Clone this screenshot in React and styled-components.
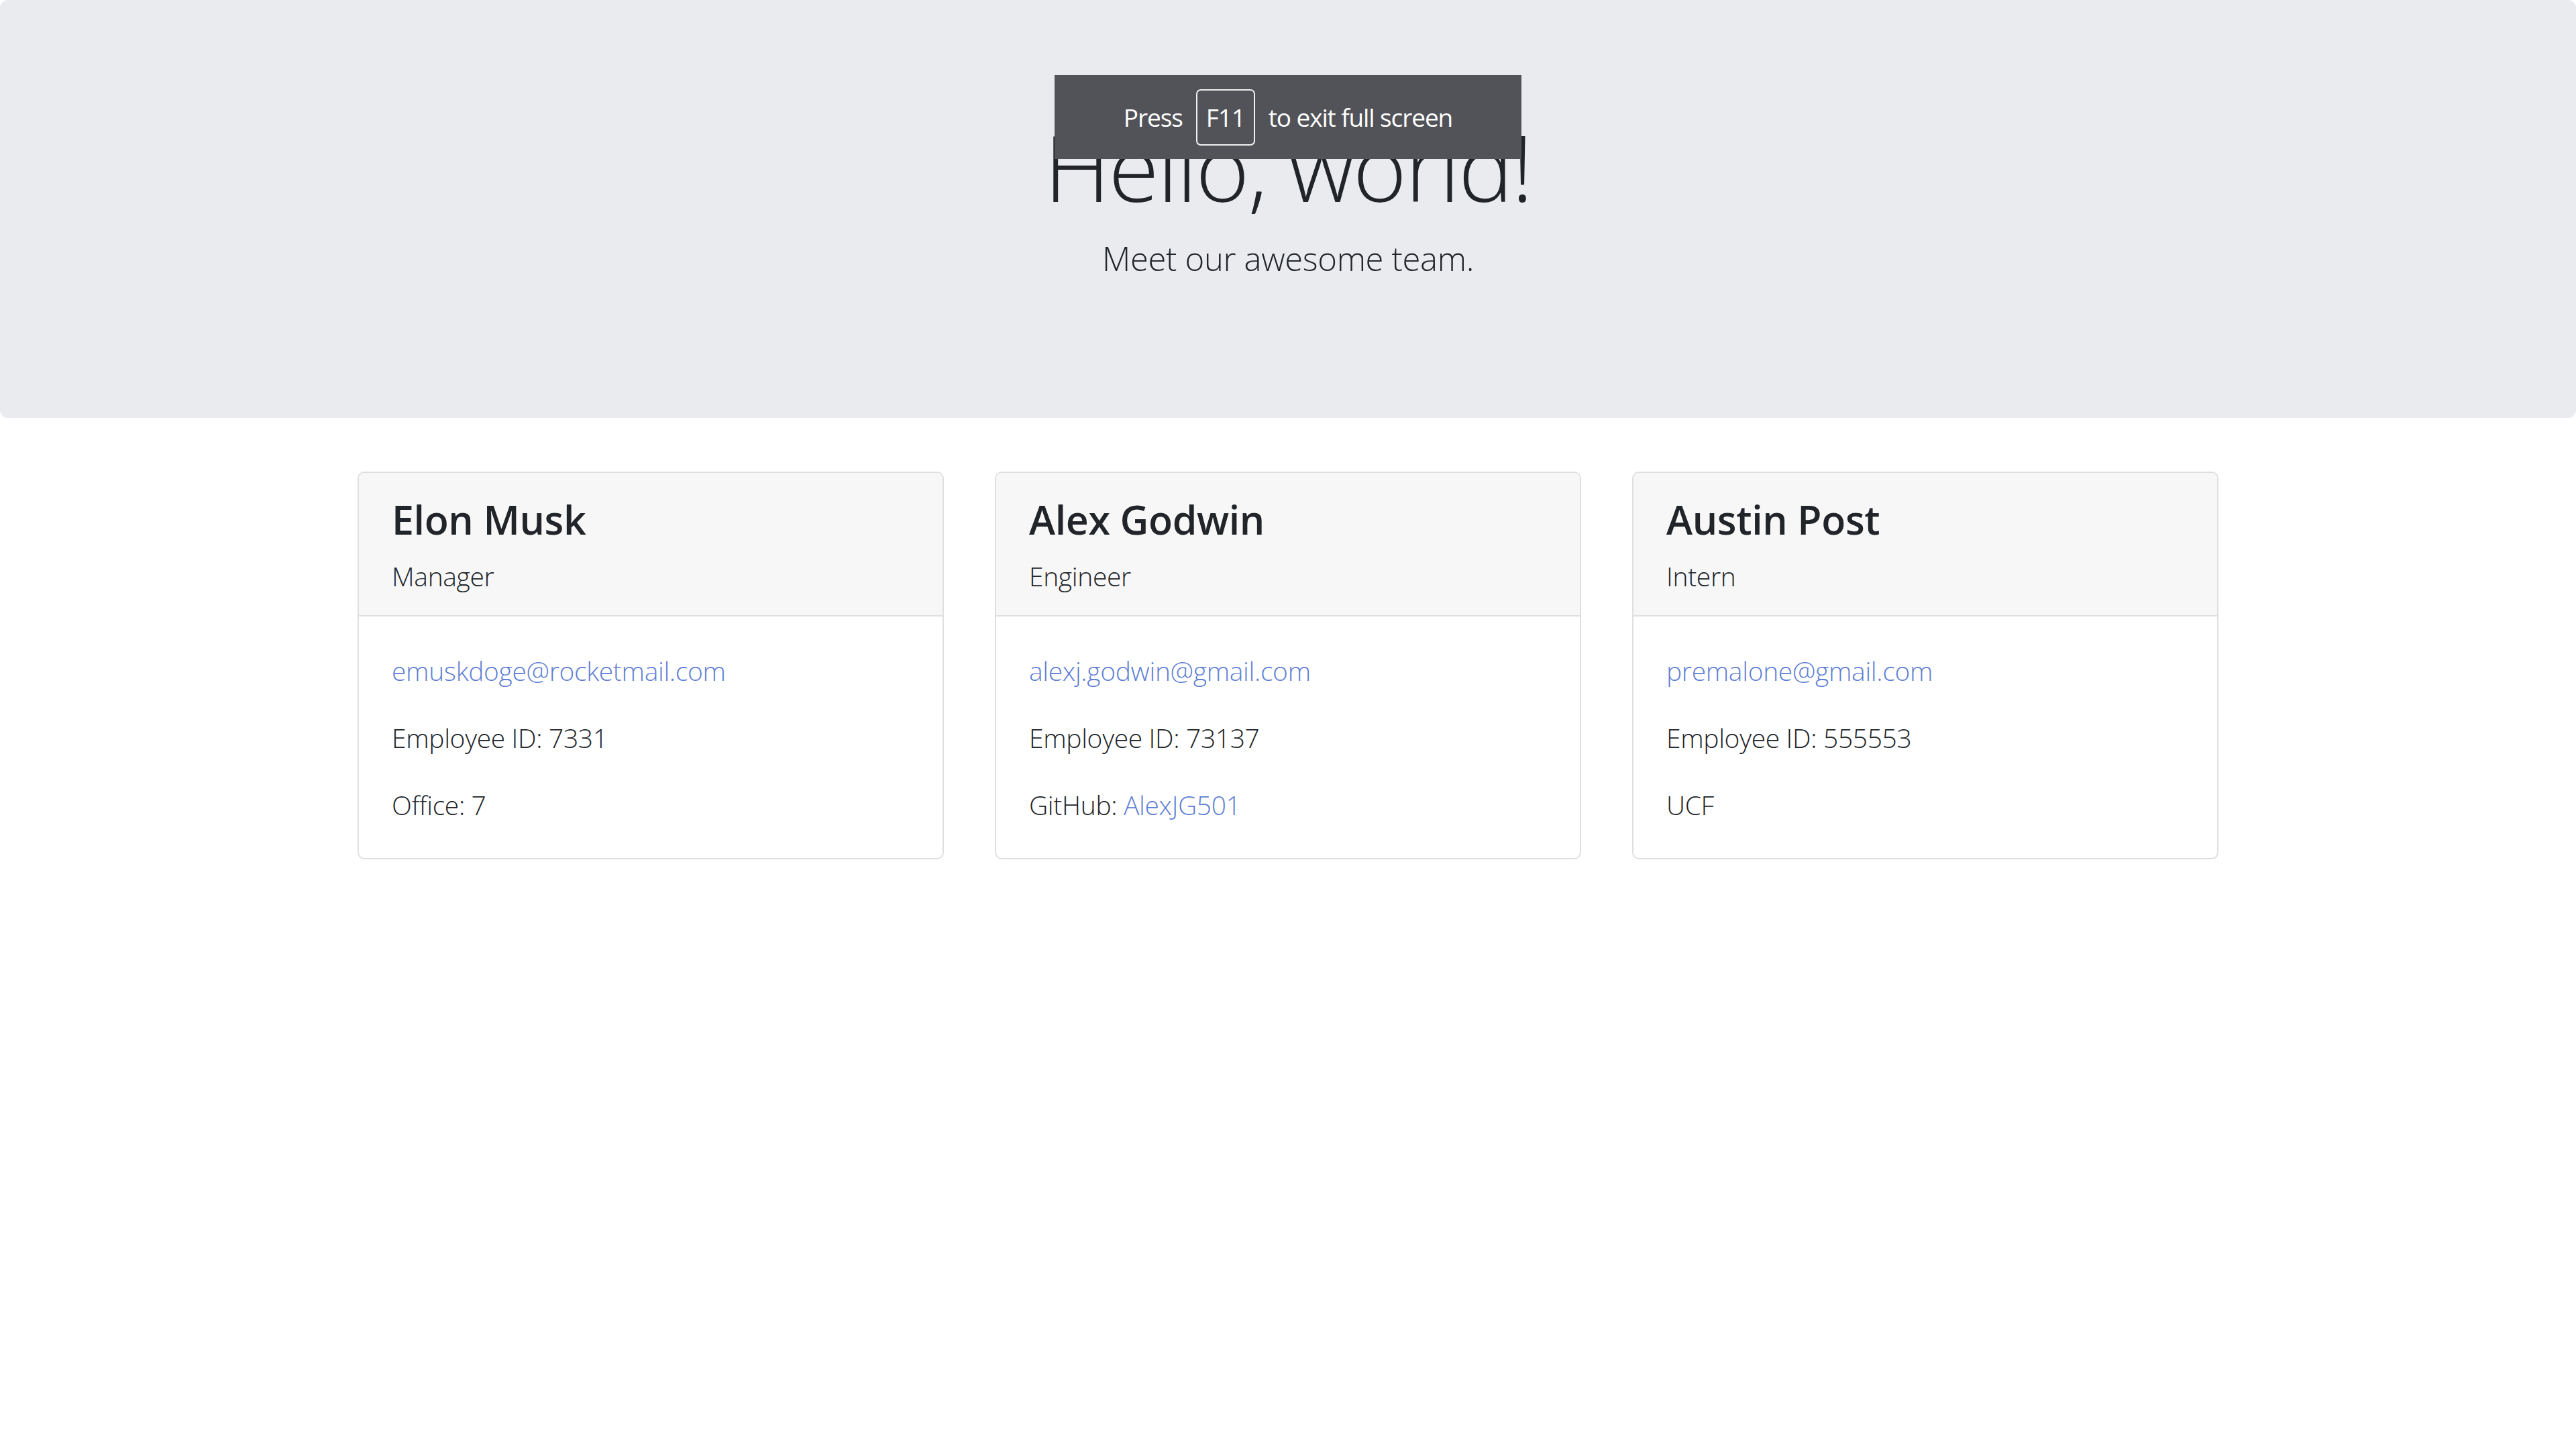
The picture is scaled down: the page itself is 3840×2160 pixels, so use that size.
import React from 'react';
import styled, { createGlobalStyle } from 'styled-components';

const GlobalStyle = createGlobalStyle`
    * {
        box-sizing: border-box;
    }
    body {
        margin: 0;
        background: #fff;
        color: #212529;
        font-family: "Open Sans", "Noto Sans", sans-serif;
        font-weight: 300;
        line-height: 1.5;
        letter-spacing: -0.022em;
    }
`;

const Page = styled.div`
    position: relative;
    min-height: 2160px;
`;

const Jumbotron = styled.header`
    background: #eaebef;
    border-radius: 12px;
    padding: 166px 78px 161px;
    margin-bottom: 80px;
    text-align: center;
`;

const Title = styled.h1`
    margin: 0 0 18px;
    font-size: 137px;
    font-weight: 300;
    line-height: 165px;
    letter-spacing: -0.018em;
`;

const Lead = styled.p`
    margin: 0 0 39px;
    font-size: 49px;
    font-weight: 300;
    line-height: 73.5px;
`;

const FullscreenNotice = styled.div`
    position: absolute;
    top: 112px;
    left: 50%;
    transform: translateX(-50%);
    width: 696px;
    height: 125px;
    background: #525358;
    color: #fff;
    font-size: 37px;
    font-weight: 400;
    letter-spacing: -0.03em;
    display: flex;
    align-items: center;
    justify-content: center;
    gap: 20px;
`;

const Key = styled.span`
    display: flex;
    align-items: center;
    justify-content: center;
    width: 88px;
    height: 84px;
    border: 2px solid #f0f0f0;
    border-radius: 7px;
`;

const CardGrid = styled.section`
    display: grid;
    grid-template-columns: repeat(3, 874px);
    gap: 76px;
    justify-content: center;
`;

const Card = styled.article`
    background: #fff;
    border: 2px solid #dfdfdf;
    border-radius: 10px;
    overflow: hidden;
`;

const CardHeader = styled.div`
    background: #f7f7f7;
    border-bottom: 2px solid #dfdfdf;
    padding: 34px 49px 29px;
`;

const Name = styled.h4`
    margin: 0 0 19.6px;
    font-size: 59px;
    font-weight: 600;
    line-height: 1.2;
    color: #212529;
`;

const Role = styled.p`
    margin: 0;
    font-size: 39px;
    line-height: 59px;
`;

const CardBody = styled.div`
    padding: 51px 49px 50px;
`;

const Line = styled.p`
    margin: 0 0 41px;
    font-size: 39px;
    line-height: 59px;

    &:last-child {
        margin-bottom: 0;
    }
`;

const Link = styled.a`
    color: #5f7fd5;
    text-decoration: none;
`;

const team = [
    { name: 'Elon Musk', role: 'Manager', email: 'emuskdoge@rocketmail.com', id: 7331, extra: <>Office: 7</> },
    {
        name: 'Alex Godwin',
        role: 'Engineer',
        email: 'alexj.godwin@gmail.com',
        id: 73137,
        extra: <>GitHub: <Link href="#">AlexJG501</Link></>,
    },
    { name: 'Austin Post', role: 'Intern', email: 'premalone@gmail.com', id: 555553, extra: <>UCF</> },
];

const App = () => {
    return (
        <Page>
            <GlobalStyle />
            <Jumbotron>
                <Title>Hello, world!</Title>
                <Lead>Meet our awesome team.</Lead>
            </Jumbotron>
            <CardGrid>
                {team.map((member) => (
                    <Card key={member.id}>
                        <CardHeader>
                            <Name>{member.name}</Name>
                            <Role>{member.role}</Role>
                        </CardHeader>
                        <CardBody>
                            <Line><Link href="#">{member.email}</Link></Line>
                            <Line>Employee ID: {member.id}</Line>
                            <Line>{member.extra}</Line>
                        </CardBody>
                    </Card>
                ))}
            </CardGrid>
            <FullscreenNotice>
                <span>Press</span>
                <Key>F11</Key>
                <span>to exit full screen</span>
            </FullscreenNotice>
        </Page>
    );
};

export default App;
